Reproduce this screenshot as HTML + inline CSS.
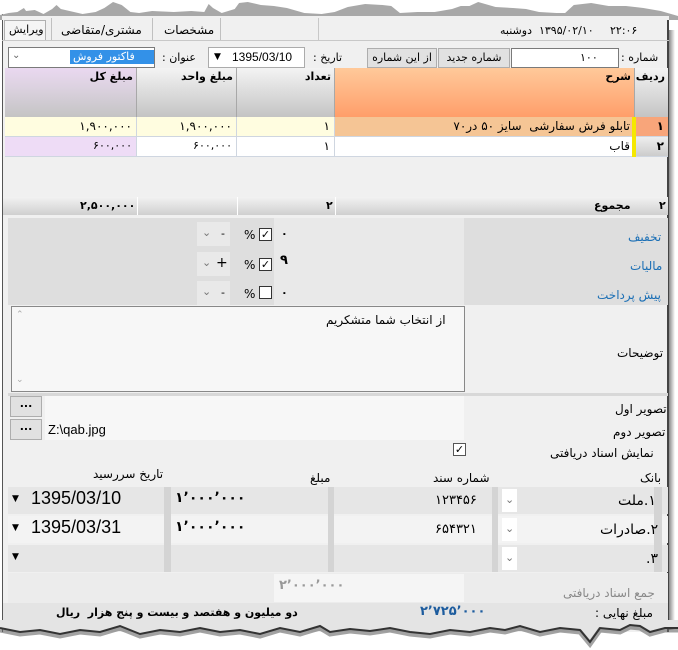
<!DOCTYPE html>
<html><head><meta charset="utf-8">
<style>
*{margin:0;padding:0;box-sizing:border-box}
body{width:678px;height:650px;background:#fff;position:relative;overflow:hidden;font-family:"DejaVu Sans","Liberation Sans",sans-serif;font-size:11px;color:#000}
.a{position:absolute}
.t{position:absolute;direction:rtl;white-space:nowrap}
.inp{position:absolute;background:#fff;border:1px solid #7a7a7a}
.btn{position:absolute;background:#e1e1e1;border:1px solid #adadad;text-align:center;line-height:18px;direction:rtl;font-size:11px}
.hd{position:absolute;top:68px;height:49px;background:linear-gradient(#f4f4f4,#dedede 45%,#c4c4c4);border-right:1px solid #a8a8a8;font-weight:bold;font-size:11px;direction:rtl;text-align:right;padding:2px 3px}
.cell{position:absolute;height:20px;border-right:1px solid #cfd6e0;border-bottom:1px solid #cfd6e0;direction:rtl;text-align:right;padding:2px 4px;font-size:12px}
.chk{position:absolute;width:13px;height:13px;border:1px solid #333;background:#fff;font-size:11px;line-height:11px;text-align:center}
.blue{color:#1b6fb5}
</style></head><body>
<div class="a" style="left:2px;top:14px;width:667px;height:618px;background:#f0f0f0;border-left:1px solid #555;border-right:2px solid #444"></div>
<div class="a" style="left:669px;top:30px;width:6px;height:600px;background:linear-gradient(90deg,#888,#fff)"></div>
<svg class="a" style="left:0;top:0" width="678" height="20"><path d="M0,20 L0,15 20,13 40,12 55,8 60,11 80,10 100,14 120,9 130,5 140,9 160,11 190,14 220,12 240,8 260,2 280,5 300,12 320,13 350,11 400,12 440,11 470,12 480,4 490,8 510,13 540,9 550,3 570,2 600,5 630,6 660,8 700,13 740,14 770,12 800,7 840,4 880,5 900,6 920,13 960,12 1000,12 1040,9 1060,6 1080,6 1100,2 1140,7 1180,8 1210,9 1240,12 1280,13 1300,13 1320,5 1360,3 1400,6 1440,6 1480,8 1520,11 1560,16 L1560,20Z" transform="scale(0.4347,1)" fill="#a8a8a8"/></svg>
<div class="a" style="left:2px;top:16px;width:667px;height:4px;background:#f0f0f0"></div>
<!-- tabs -->
<div class="a" style="left:2px;top:40px;width:667px;height:1px;background:#c8c8c8"></div>
<div class="a" style="left:4px;top:20px;width:42px;height:20px;background:#f5f5f5;border:1px solid #b0b0b0;border-bottom:none"></div>
<div class="t" style="left:9px;top:23px;font-size:11px">ویرایش</div>
<div class="a" style="left:51px;top:18px;width:170px;height:22px;border-left:1px solid #c0c0c0;border-right:1px solid #c0c0c0;background:#f0f0f0"></div>
<div class="a" style="left:152px;top:18px;width:1px;height:22px;background:#c0c0c0"></div>
<div class="t" style="left:61px;top:23px;font-size:12px">مشتری/متقاضی</div>
<div class="t" style="left:164px;top:23px;font-size:12px">مشخصات</div>
<div class="a" style="left:318px;top:18px;width:1px;height:22px;background:#c8c8c8"></div>
<div class="t" style="left:500px;top:24px;font-size:11px">۱۳۹۵/۰۲/۱۰&nbsp; دوشنبه</div>
<div class="t" style="left:610px;top:24px;font-size:11px">۲۲:۰۶</div>
<!-- top fields -->
<div class="t" style="left:621px;top:51px">شماره :</div>
<div class="inp" style="left:511px;top:48px;width:108px;height:20px"></div>
<div class="t" style="left:580px;top:51px">۱۰۰</div>
<div class="btn" style="left:438px;top:48px;width:72px;height:20px">شماره جدید</div>
<div class="btn" style="left:367px;top:48px;width:70px;height:20px">از این شماره</div>
<div class="t" style="left:313px;top:51px">تاریخ :</div>
<div class="inp" style="left:208px;top:47px;width:97px;height:21px;border-color:#ababab"></div>
<div class="a" style="left:214px;top:52px;font-size:9px">&#9660;</div>
<div class="a" style="left:232px;top:50px;font-family:'Liberation Sans';font-size:12px">1395/03/10</div>
<div class="t" style="left:162px;top:51px">عنوان :</div>
<div class="inp" style="left:8px;top:47px;width:147px;height:21px"></div>
<div class="a" style="left:70px;top:50px;width:84px;height:14px;background:#3391e8"></div>
<div class="t" style="left:73px;top:50px;color:#fff">فاکتور فروش</div>
<div class="a" style="left:12px;top:50px;color:#666;font-size:10px">&#8964;</div>
<!-- grid -->
<div class="hd" style="left:5px;width:132px;background:linear-gradient(#ead8f0,#dcd2e0 40%,#c4c4c4)">مبلغ کل</div>
<div class="hd" style="left:137px;width:100px">مبلغ واحد</div>
<div class="hd" style="left:237px;width:98px">تعداد</div>
<div class="hd" style="left:335px;width:300px;background:linear-gradient(#ffc99a,#ff9e6a)">شرح</div>
<div class="hd" style="left:635px;width:33px;border-right:none">ردیف</div>
<div class="cell" style="left:5px;top:117px;width:132px;background:#fffde0">۱,۹۰۰,۰۰۰</div>
<div class="cell" style="left:137px;top:117px;width:100px;background:#fffde0">۱,۹۰۰,۰۰۰</div>
<div class="cell" style="left:237px;top:117px;width:98px;background:#fffde0">۱</div>
<div class="cell" style="left:335px;top:117px;width:300px;background:#f5c595">تابلو فرش سفارشی &nbsp;سایز ۵۰ در۷۰</div>
<div class="a" style="left:632px;top:117px;width:4px;height:20px;background:#f5e800"></div>
<div class="cell" style="left:636px;top:117px;width:32px;background:#f8a57a;font-weight:bold;border-right:none">۱</div>
<div class="cell" style="left:5px;top:137px;width:132px;background:#eedcf6;font-size:11px">۶۰۰,۰۰۰</div>
<div class="cell" style="left:137px;top:137px;width:100px;background:#fff;font-size:11px">۶۰۰,۰۰۰</div>
<div class="cell" style="left:237px;top:137px;width:98px;background:#fff">۱</div>
<div class="cell" style="left:335px;top:137px;width:300px;background:#fff">قاب</div>
<div class="a" style="left:632px;top:137px;width:4px;height:20px;background:#f5e800"></div>
<div class="cell" style="left:636px;top:137px;width:32px;background:linear-gradient(#eee,#ccc);font-weight:bold;border-right:none">۲</div>
<!-- totals -->
<div class="a" style="left:3px;top:197px;width:665px;height:18px;background:linear-gradient(#f2f2f2,#cfcfcf)"></div>
<div class="a" style="left:137px;top:197px;width:1px;height:18px;background:#fff"></div>
<div class="a" style="left:237px;top:197px;width:1px;height:18px;background:#fff"></div>
<div class="a" style="left:335px;top:197px;width:1px;height:18px;background:#fff"></div>
<div class="t" style="left:80px;top:199px;font-weight:bold">۲,۵۰۰,۰۰۰</div>
<div class="t" style="left:326px;top:199px;font-weight:bold">۲</div>
<div class="t" style="left:594px;top:199px;font-weight:bold">مجموع</div>
<div class="t" style="left:659px;top:199px;font-weight:bold">۲</div>
<!-- discount panel -->
<div class="a" style="left:8px;top:218px;width:660px;height:87px;background:#dedede"></div>
<div class="a" style="left:274px;top:218px;width:190px;height:87px;background:#e9e9e9"></div>
<div class="t blue" style="left:628px;top:230px;font-size:12px">تخفیف</div>
<div class="t blue" style="left:630px;top:259px;font-size:12px">مالیات</div>
<div class="t blue" style="left:597px;top:288px;font-size:12px">پیش پرداخت</div>
<div class="a" style="left:197px;top:222px;width:33px;height:24px;background:#e9e9e9"></div>
<div class="a" style="left:197px;top:252px;width:33px;height:24px;background:#e9e9e9"></div>
<div class="a" style="left:197px;top:281px;width:33px;height:24px;background:#e9e9e9"></div>
<div class="a" style="left:202px;top:226px;color:#777">&#8964;</div><div class="a" style="left:221px;top:227px">-</div>
<div class="a" style="left:202px;top:256px;color:#777">&#8964;</div><div class="a" style="left:216px;top:255px;font-size:14px">+</div>
<div class="a" style="left:202px;top:285px;color:#777">&#8964;</div><div class="a" style="left:221px;top:286px">-</div>
<div class="a" style="left:244px;top:228px;font-size:12px">%</div><div class="chk" style="left:259px;top:228px">&#10003;</div>
<div class="a" style="left:244px;top:258px;font-size:12px">%</div><div class="chk" style="left:259px;top:258px">&#10003;</div>
<div class="a" style="left:244px;top:287px;font-size:12px">%</div><div class="chk" style="left:259px;top:286px"></div>
<div class="a" style="left:281px;top:227px;font-weight:bold">۰</div>
<div class="a" style="left:280px;top:253px;font-weight:bold;font-size:13px">۹</div>
<div class="a" style="left:281px;top:286px;font-weight:bold">۰</div>
<!-- notes -->
<div class="a" style="left:11px;top:306px;width:454px;height:86px;background:#f7f7f7;border:1px solid #888"></div>
<div class="t" style="left:326px;top:313px;font-size:12px">از انتخاب شما متشکریم</div>
<div class="a" style="left:16px;top:310px;color:#aaa;font-size:9px">&#8963;</div>
<div class="a" style="left:16px;top:375px;color:#aaa;font-size:9px">&#8964;</div>
<div class="t" style="left:617px;top:346px;font-size:12px">توضیحات</div>
<div class="a" style="left:8px;top:393px;width:660px;height:3px;background:#d8d8d8"></div>
<!-- images -->
<div class="a" style="left:45px;top:396px;width:419px;height:44px;background:#f7f7f7"></div>
<div class="btn" style="left:10px;top:396px;width:32px;height:21px;font-weight:bold;line-height:14px">...</div>
<div class="btn" style="left:10px;top:419px;width:32px;height:21px;font-weight:bold;line-height:14px">...</div>
<div class="a" style="left:48px;top:422px;font-family:'Liberation Sans';font-size:13px">Z:\qab.jpg</div>
<div class="t" style="left:615px;top:402px;font-size:12px">تصویر اول</div>
<div class="t" style="left:613px;top:425px;font-size:12px">تصویر دوم</div>
<div class="t" style="left:550px;top:446px;font-size:12px">نمایش اسناد دریافتی</div>
<div class="chk" style="left:453px;top:443px;border-color:#555">&#10003;</div>
<!-- cheques -->
<div class="t" style="left:640px;top:471px;font-size:12px">بانک</div>
<div class="t" style="left:433px;top:471px;font-size:12px">شماره سند</div>
<div class="t" style="left:310px;top:471px;font-size:12px">مبلغ</div>
<div class="t" style="left:93px;top:467px;font-size:12px">تاریخ سررسید</div>
<div class="a" style="left:8px;top:487px;width:660px;height:27px;background:#e6e6e6"></div>
<div class="a" style="left:8px;top:516px;width:660px;height:27px;background:#f3f3f3"></div>
<div class="a" style="left:8px;top:545px;width:660px;height:27px;background:#e6e6e6"></div>
<div class="a" style="left:164px;top:487px;width:7px;height:85px;background:#d4d4d4"></div>
<div class="a" style="left:328px;top:487px;width:6px;height:85px;background:#d4d4d4"></div>
<div class="a" style="left:492px;top:487px;width:6px;height:85px;background:#d4d4d4"></div>
<div class="a" style="left:502px;top:489px;width:15px;height:23px;background:#fff"></div>
<div class="a" style="left:502px;top:518px;width:15px;height:23px;background:#fff"></div>
<div class="a" style="left:502px;top:547px;width:15px;height:23px;background:#fff"></div>
<div class="a" style="left:505px;top:493px;color:#777">&#8964;</div>
<div class="a" style="left:505px;top:522px;color:#777">&#8964;</div>
<div class="a" style="left:505px;top:551px;color:#777">&#8964;</div>
<div class="a" style="left:654px;top:487px;width:8px;height:85px;background:#d4d4d4"></div>
<div class="t" style="left:618px;top:493px;font-size:14px">۱.ملت</div>
<div class="t" style="left:600px;top:522px;font-size:14px">۲.صادرات</div>
<div class="t" style="left:646px;top:551px;font-size:14px">۳.</div>
<div class="t" style="left:435px;top:493px;font-size:13px">۱۲۳۴۵۶</div>
<div class="t" style="left:435px;top:522px;font-size:13px">۶۵۴۳۲۱</div>
<div class="t" style="left:175px;top:490px;font-size:14px;font-weight:bold">۱٬۰۰۰٬۰۰۰</div>
<div class="t" style="left:175px;top:519px;font-size:14px;font-weight:bold">۱٬۰۰۰٬۰۰۰</div>
<div class="a" style="left:12px;top:494px;font-size:9px">&#9660;</div>
<div class="a" style="left:12px;top:523px;font-size:9px">&#9660;</div>
<div class="a" style="left:12px;top:552px;font-size:9px">&#9660;</div>
<div class="a" style="left:31px;top:488px;font-family:'Liberation Sans';font-size:18px">1395/03/10</div>
<div class="a" style="left:31px;top:517px;font-family:'Liberation Sans';font-size:18px">1395/03/31</div>
<!-- sum -->
<div class="a" style="left:8px;top:573px;width:660px;height:30px;background:#ececec"></div>
<div class="a" style="left:274px;top:574px;width:190px;height:28px;background:#f5f5f5"></div>
<div class="t" style="left:279px;top:578px;font-size:13px;color:#999;font-weight:bold">۲٬۰۰۰٬۰۰۰</div>
<div class="t" style="left:563px;top:586px;color:#888;font-size:12px">جمع اسناد دریافتی</div>
<div class="a" style="left:3px;top:603px;width:665px;height:22px;background:#e4e4e4"></div>
<div class="t" style="left:595px;top:606px;font-size:12px">مبلغ نهایی :</div>
<div class="t" style="left:420px;top:604px;font-size:13px;font-weight:bold;color:#1d5c9e">۲٬۷۲۵٬۰۰۰</div>
<div class="t" style="left:56px;top:606px;font-size:11px;font-weight:bold">دو میلیون و هفتصد و بیست و پنج هزار &nbsp;ریال</div>
<!-- bottom torn edge -->
<svg class="a" style="left:0;top:620px" width="678" height="30"><path d="M0,0 L678,0 L678,8 L665,8 650,12 640,6 630,5 620,10 600,8 590,22 580,10 560,8 540,12 520,6 505,10 490,8 470,12 450,10 430,14 410,12 390,8 370,11 350,9 330,12 320,6 300,12 280,8 260,14 240,10 220,12 200,8 180,12 160,10 140,14 120,6 100,12 80,10 60,14 40,10 20,12 0,8Z" fill="#e4e4e4"/><path d="M0,10 L20,14 40,12 60,16 80,12 100,14 120,8 140,16 160,12 180,14 200,10 220,14 240,12 260,16 280,10 300,14 320,8 330,14 350,11 370,13 390,10 410,14 430,16 450,12 470,14 490,10 505,12 520,8 540,14 560,10 580,12 590,24 600,10 620,12 630,7 640,8 650,14 665,10 678,10" fill="none" stroke="#666" stroke-width="5" opacity="0.6"/><path d="M0,8 L20,12 40,10 60,14 80,10 100,12 120,6 140,14 160,10 180,12 200,8 220,12 240,10 260,14 280,8 300,12 320,6 330,12 350,9 370,11 390,8 410,12 430,14 450,10 470,12 490,8 505,10 520,6 540,12 560,8 580,10 590,22 600,8 620,10 630,5 640,6 650,12 665,8 678,8" fill="none" stroke="#333" stroke-width="2"/></svg>
</body></html>
